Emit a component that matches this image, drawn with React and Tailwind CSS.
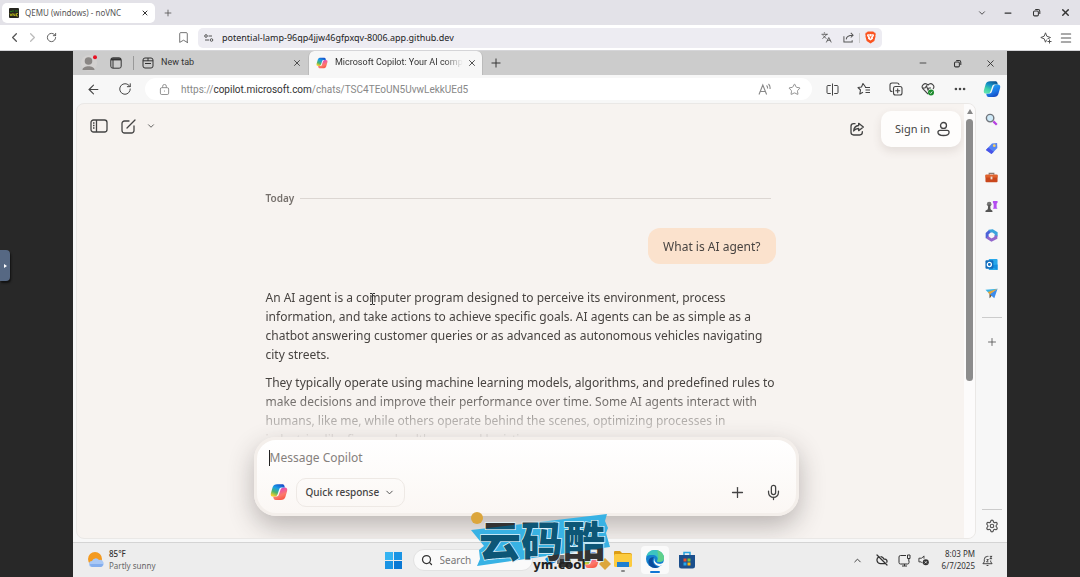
import React, { useId } from 'react';
import {
    ArrowLeft, Bookmark, ChevronDown, ChevronLeft, ChevronRight, ChevronUp, CloudOff, Columns2, Ellipsis,
    Languages, Menu, Mic, Minus, Plus, RotateCw, Search, Settings, Star, X,
} from 'lucide-react';

const IconButton = ({ label, className = '', children }) => (
    <button type="button" aria-label={label} className={`flex shrink-0 items-center justify-center ${className}`}>
        {children}
    </button>
);

const CopilotLogo = ({ blue = false, className }) => {
    const id = useId();
    const leaf = 'M9.500 1.500h7c1.500 0 2.300.8 2.700 2.200l.6 2.300h-4.600c-1.800 0-2.500 1-3 2.600L10.200 14.500c-.7 2.300-2 3.500-4.500 3.500H4.400C1.500 18 .5 16.200 1.200 13.500L3.500 5.500C4.300 2.800 6.400 1.500 9.500 1.500z';
    return (
        <svg viewBox="0 0 24 24" className={className} aria-hidden="true">
            <defs>
                <linearGradient id={`${id}a`} x1="0.8" y1="0" x2="0.3" y2="1">
                    <stop offset="0" stopColor={blue ? '#0a4f8c' : '#1648c8'} />
                    <stop offset="0.4" stopColor={blue ? '#1593c8' : '#1a9ee8'} />
                    <stop offset="0.72" stopColor={blue ? '#3fd0a8' : '#4db36a'} />
                    <stop offset="1" stopColor={blue ? '#5fe3b0' : '#f3cf2c'} />
                </linearGradient>
                <linearGradient id={`${id}b`} x1="0.2" y1="0" x2="0.7" y2="1">
                    <stop offset="0" stopColor={blue ? '#1440b8' : '#f8503c'} />
                    <stop offset="0.4" stopColor={blue ? '#1b74e4' : '#fc7a6a'} />
                    <stop offset="0.7" stopColor={blue ? '#1f8eee' : '#ee5aa0'} />
                    <stop offset="1" stopColor={blue ? '#2bb5f5' : '#a44be6'} />
                </linearGradient>
            </defs>
            <path d={leaf} fill={`url(#${id}b)`} transform="rotate(180 12 12)" />
            <path d={leaf} fill={`url(#${id}a)`} />
        </svg>
    );
};

const RestoreIcon = ({ className }) => (
    <svg viewBox="0 0 12 12" fill="none" stroke="currentColor" strokeWidth="1.4" className={className} aria-hidden="true">
        <rect x="2" y="4" width="6.500" height="6.500" rx="1.500" />
        <path d="M4.300 2h3.700a2.400 2.400 0 0 1 2.400 2.400v3.600" />
    </svg>
);

const ShareIcon = ({ className }) => (
    <svg viewBox="0 0 24 24" fill="none" stroke="currentColor" strokeWidth="2" strokeLinecap="round" strokeLinejoin="round" className={className} aria-hidden="true">
        <path d="M9 4H7a4 4 0 0 0-4 4v9a4 4 0 0 0 4 4h9a4 4 0 0 0 4-4v-1" />
        <path d="M14.500 3.500 21.500 9l-7 5.500v-3.300c-3.500 0-5.600 1-7.500 3.800.4-4.800 3-7.800 7.500-8.200z" />
    </svg>
);

const BraveTabs = () => (
    <div className="flex h-[25px] items-center bg-[#e3e2e8] pl-[2px] text-[#333]">
        <div className="flex h-5 w-[153px] items-center rounded-[5px] bg-white pl-[7px] pr-[5px]">
            <svg viewBox="0 0 10 10" className="mr-[6px] size-[10px]" aria-hidden="true">
                <rect width="10" height="10" rx="1" fill="#26261f" />
                <path d="M1 3.500h2M4 2v2M6 3h3" stroke="#24761f" />
                <path d="M1 5.500l1 2.500 1-2.500M4 8V5.500L6 8V5.500M9 5.500H7.500V8H9" stroke="#c5c516" strokeWidth=".8" fill="none" />
            </svg>
            <span className="flex-1 text-[8px] text-[#555]">QEMU (windows) - noVNC</span>
            <IconButton label="Close tab" className="size-[10px]"><X className="size-2" strokeWidth={3} /></IconButton>
        </div>
        <IconButton label="New tab" className="ml-2 size-[10px]"><Plus className="size-[10px] text-[#555]" /></IconButton>
        <div className="ml-auto flex items-center">
            <IconButton label="Search tabs" className="w-6"><ChevronDown className="size-[10px]" /></IconButton>
            <IconButton label="Minimize" className="w-7"><Minus className="size-[10px]" strokeWidth={3} /></IconButton>
            <IconButton label="Restore" className="w-7"><RestoreIcon className="size-[9px]" /></IconButton>
            <IconButton label="Close" className="w-[30px]"><X className="size-[11px]" strokeWidth={3} /></IconButton>
        </div>
    </div>
);

const BraveToolbar = () => (
    <div className="flex h-[26px] items-center border-b border-[#d5d5d8] bg-white text-[#555]">
        <div className="flex w-[198px] items-center pl-[5px] pr-[6px]">
            <IconButton label="Back" className="w-[18px]"><ChevronLeft className="size-[15px]" /></IconButton>
            <IconButton label="Forward" className="w-[18px] text-[#bbb]"><ChevronRight className="size-[15px]" /></IconButton>
            <IconButton label="Reload" className="w-5"><RotateCw className="size-[11px]" /></IconButton>
            <IconButton label="Bookmark" className="ml-auto w-[18px]"><Bookmark className="size-[13px]" strokeWidth={1.5} /></IconButton>
        </div>
        <div className="flex h-5 flex-1 items-center rounded-[5px] bg-[#edecf2] pl-[6px] pr-[6px]">
            <svg viewBox="0 0 10 8" fill="none" stroke="currentColor" className="h-2 w-[10px]" aria-hidden="true">
                <circle cx="2" cy="2" r="1.300" />
                <path d="M4.500 2H8M1 6h4" />
                <circle cx="7.500" cy="6" r="1.300" />
            </svg>
            <input aria-label="Address" className="ml-2 min-w-0 flex-1 bg-transparent text-[9px] text-[#222] outline-none" defaultValue="potential-lamp-96qp4jjw46gfpxqv-8006.app.github.dev" />
            <IconButton label="Translate" className="w-[22px]"><Languages className="size-[11px]" /></IconButton>
            <IconButton label="Share" className="w-[22px]">
                <svg viewBox="0 0 12 12" fill="none" stroke="currentColor" strokeWidth="1.100" className="size-[11px]" aria-hidden="true">
                    <path d="M1 4.500V11h9V9M3.500 8c.3-3 2.500-4.500 7-4.500M8.500 1l2.500 2.500L8.500 6" />
                </svg>
            </IconButton>
            <span className="h-[10px] w-px bg-[#ccc]" />
            <IconButton label="Brave Shields" className="ml-1 w-3">
                <svg viewBox="0 0 12 14" className="h-[13px] w-[11px]" aria-hidden="true">
                    <path d="M3 .5h6l1 1 1.300.2.4 2-.4 1.300.2.800-1.300 5L6 13.500 1.800 10.800.5 5.800l.2-.8L.3 3.700l.4-2L2 1.500z" fill="#fb5421" />
                    <path d="M3 3.300l1.500.3L6 3.200l1.500.4L9 3.300l.9 1.500-1.500 2.500.4 1-2.800 2-2.800-2 .4-1-1.500-2.500z" fill="#fff" />
                    <path d="M4 5l1.600.7L6 8l.4-2.300L8 5" fill="none" stroke="#fb5421" strokeWidth=".8" />
                </svg>
            </IconButton>
        </div>
        <div className="flex w-[198px] items-center justify-end pr-1">
            <IconButton label="Leo AI" className="w-5">
                <svg viewBox="0 0 12 12" fill="none" stroke="currentColor" strokeLinejoin="round" className="size-3" aria-hidden="true">
                    <path d="M5.500.8 6.800 4.200 10.500 5.500 7.500 6.800M5.500.8 4.200 4.200.8 5.500l3.400 1.300 1.300 3.400 1-2.500M9.500 7.500v4M7.500 9.500h4" />
                </svg>
            </IconButton>
            <IconButton label="Menu" className="w-5"><Menu className="size-[14px]" strokeWidth={1.8} /></IconButton>
        </div>
    </div>
);

const EdgeTabs = () => (
    <div className="flex h-6 items-center bg-[#ccc] font-['Roboto',sans-serif] text-[#333]">
        <button type="button" aria-label="Profile" className="ml-2 flex w-4 justify-center">
            <svg viewBox="0 0 16 16" className="size-4" aria-hidden="true">
                <circle cx="8" cy="8" r="8" fill="#d3d1d0" />
                <circle cx="7.500" cy="6" r="3.800" fill="#8a8684" />
                <path d="M1.500 15c0-5 12-5 12 0z" fill="#8a8684" />
                <circle cx="14" cy="2.200" r="2" fill="#e81123" />
            </svg>
        </button>
        <IconButton label="Workspaces" className="ml-[13px] w-3">
            <svg viewBox="0 0 12 12" className="size-3" fill="none" stroke="currentColor" aria-hidden="true">
                <rect x=".8" y=".8" width="10.400" height="10.400" rx="2" />
                <path d="M1 2.300h10" strokeWidth="2.200" />
                <path d="M3 3v8" />
            </svg>
        </IconButton>
        <span className="ml-[11px] h-[14px] w-px bg-[#999]" />
        <div className="flex w-[174px] items-center pl-2 pr-[6px]">
            <svg viewBox="0 0 12 12" className="mr-[7px] size-3" fill="none" stroke="currentColor" aria-hidden="true">
                <rect x="1" y="1" width="10" height="10" rx="2" />
                <path d="M1 3.800h10M3 6.500h6M6 1v3" />
            </svg>
            <span className="flex-1 text-[9px]">New tab</span>
            <IconButton label="Close New tab" className="size-[10px]"><X className="size-[10px]" /></IconButton>
        </div>
        <div className="flex h-6 w-[175px] items-center rounded-t-md border-x border-[#bbb] bg-[#f7f7f7] pl-[7px] pr-[5px]">
            <CopilotLogo className="mr-[7px] size-3" />
            <span className="min-w-0 flex-1 overflow-hidden whitespace-nowrap text-[9px] mask-r-from-85%">Microsoft Copilot: Your AI companion</span>
            <IconButton label="Close Copilot tab" className="ml-1 size-[10px]"><X className="size-[10px]" /></IconButton>
        </div>
        <IconButton label="New tab" className="ml-[6px] w-[14px]"><Plus className="size-[14px]" strokeWidth={1.700} /></IconButton>
        <div className="ml-auto flex items-center">
            <IconButton label="Minimize window" className="w-[34px]"><Minus className="size-[10px]" /></IconButton>
            <IconButton label="Restore window" className="w-[34px]"><RestoreIcon className="size-[9px]" /></IconButton>
            <IconButton label="Close window" className="w-[33px]"><X className="size-[11px]" /></IconButton>
        </div>
    </div>
);

const EdgeToolbar = () => (
    <div className="flex h-7 items-center bg-[#f7f7f7] pl-1 text-[#444]">
        <IconButton label="Back" className="w-8"><ArrowLeft className="size-[15px]" strokeWidth={1.700} /></IconButton>
        <IconButton label="Refresh" className="w-8"><RotateCw className="size-[14px]" strokeWidth={1.700} /></IconButton>
        <div className="ml-1 mr-1 flex h-[22px] flex-1 items-center rounded-full bg-white pl-[14px] pr-[11px] text-[10px] text-[#888]">
            <svg viewBox="0 0 12 12" fill="none" stroke="currentColor" className="mr-[11px] size-[11px]" aria-hidden="true">
                <rect x="1.500" y="4" width="9" height="7.500" rx="1.500" />
                <path d="M4 4V2.500a2 2 0 0 1 4 0V4M5.500 7.700h1" />
            </svg>
            <a href="#chat" className="flex-1 font-['Roboto',sans-serif]">https://<span className="text-[#333]">copilot.microsoft.com</span>/chats/TSC4TEoUN5UvwLekkUEd5</a>
            <button type="button" aria-label="Read aloud" className="w-4">
                <svg viewBox="0 0 14 12" className="h-3 w-[14px]" fill="none" stroke="currentColor" strokeWidth="1.100" aria-hidden="true">
                    <path d="M1 11.500 4.800 2l3.800 9.500M2.300 8.500h5M8.500 2.500q1.300 1 1 3M10.500 1q2 2 1.500 5" />
                </svg>
            </button>
            <IconButton label="Add to favorites" className="ml-[13px] w-[14px]"><Star className="size-[13px]" strokeWidth={1.700} /></IconButton>
        </div>
        <IconButton label="Split screen" className="w-8">
            <svg viewBox="0 0 13 13" fill="none" stroke="currentColor" className="size-[13px]" aria-hidden="true">
                <path d="M6.500.5v12M4.800 2.500H2A1 1 0 0 0 1 3.500v6a1 1 0 0 0 1 1h2.800M8.200 2.500H11a1 1 0 0 1 1 1v6a1 1 0 0 1-1 1H8.200" />
            </svg>
        </IconButton>
        <IconButton label="Favorites" className="w-8">
            <svg viewBox="0 0 14 14" className="size-[14px]" fill="none" stroke="currentColor" strokeWidth="1.100" strokeLinejoin="round" aria-hidden="true">
                <path d="M8.500 5 6 1.500 4.500 5 1 5.500 3.500 8l-.7 4L6 10.300M8 5.500h5M8.500 8h4.500M8.500 10.500h4.500" />
            </svg>
        </IconButton>
        <IconButton label="Collections" className="w-8">
            <svg viewBox="0 0 14 14" className="size-[14px]" fill="none" stroke="currentColor" strokeWidth="1.100" strokeLinecap="round" aria-hidden="true">
                <rect x="4.500" y="4.500" width="8.500" height="8.500" rx="2" />
                <path d="M3 9.500A2 2 0 0 1 1 7.500V3a2 2 0 0 1 2-2h5a2 2 0 0 1 2 1.500M8.700 6.700v4M6.700 8.700h4" />
            </svg>
        </IconButton>
        <IconButton label="Browser essentials" className="w-8">
            <svg viewBox="0 0 14 14" className="size-[14px]" fill="none" stroke="currentColor" strokeWidth="1.100" aria-hidden="true">
                <path d="M7 12 2 7C-.5 4 3.500-.5 7 3c3.500-3.500 7.500 1 5 4M1.500 6H4l1.500-2L7 8l1-2h2" />
                <circle cx="10" cy="10.500" r="3" fill="#1c8a2c" stroke="none" />
                <path d="M8.700 10.500l1 1 1.500-2" stroke="#fff" strokeWidth=".8" />
            </svg>
        </IconButton>
        <IconButton label="More" className="w-8"><Ellipsis className="size-[14px]" strokeWidth={2.500} /></IconButton>
        <IconButton label="Copilot" className="w-[31px]"><CopilotLogo blue className="size-[18px]" /></IconButton>
    </div>
);

const sidebarApps = [
    {
        name: 'Search',
        art: <><circle cx="5.500" cy="5.500" r="4" fill="#cfeaf8" stroke="#70757c" strokeWidth="1.500" /><path d="M9 9l3.700 3.700" stroke="#b63fe0" strokeWidth="2.400" /></>,
    },
    {
        name: 'Shopping',
        art: <><path d="M7.500 1.500 13 1l.3 5.500L7 13 1 8.500z" fill="#5484f2" /><path d="M1 8.500 7 13l2.500-2.500L3.500 6z" fill="#4a54e8" /><circle cx="10" cy="4" r="1.500" fill="#f5cf62" /></>,
    },
    {
        name: 'Tools',
        art: <><path d="M4.500 4V2.500h5V4" fill="none" stroke="#8a7a70" strokeWidth="1.200" /><rect x=".5" y="4" width="13" height="8" rx="1" fill="#c9471c" /><path d="M.5 4h13v3H.5z" fill="#e0622c" /><rect x="6" y="6" width="2" height="3" fill="#e8ddd5" /></>,
    },
    {
        name: 'Games',
        art: <><path d="M8.500 1h5v2l-1 1v4l1 1.500h-5l.8-1.500V4l-.8-1z" fill="#b44df0" /><circle cx="4.500" cy="4.500" r="2.500" fill="#777" /><path d="M3.500 5h2l.5 5 2 1.500V13H.5v-1.500L3 10z" fill="#555" /></>,
    },
    {
        name: 'Microsoft 365',
        art: <><path d="M4 2.500 8 2l4 2.500V8" fill="none" stroke="#39a4dc" strokeWidth="3.200" /><path d="M5 2.500 2.300 5v5" fill="none" stroke="#4b62d8" strokeWidth="3.200" /><path d="M2.300 9 7 12l4.700-2.500V7" fill="none" stroke="#9367cc" strokeWidth="3.200" /></>,
    },
    {
        name: 'Outlook',
        art: <><rect x="4" y="1" width="9.500" height="12" rx="1" fill="#28a8ea" /><path d="M5 8l8.500 5V7z" fill="#1490df" /><rect x=".5" y="2.500" width="8.500" height="9" rx="1" fill="#0f6cbd" /><circle cx="4.700" cy="7" r="2.200" fill="none" stroke="#fff" strokeWidth="1.300" /></>,
    },
    {
        name: 'Drop',
        art: <><path d="M.5 3 13.500 2 5 7.500z" fill="#38b4e8" /><path d="M13.500 2 10 12 7 9.500 5 12V7.500z" fill="#3c8cec" /><path d="M3 5.500 13.500 2 5 8z" fill="#e8a63a" /><path d="M5 7.500V12l2-2.500z" fill="#8c5a18" /></>,
    },
];

const EdgeSidebar = () => (
    <nav aria-label="Sidebar" className="flex w-[31px] flex-col items-center bg-[#f7f7f7] pt-[2px] text-[#555]">
        {sidebarApps.map((app) => (
            <IconButton key={app.name} label={app.name} className="h-[29px]">
                <svg viewBox="0 0 14 14" className="size-[13px]" aria-hidden="true">{app.art}</svg>
            </IconButton>
        ))}
        <span className="mt-[9px] h-px w-5 bg-[#ccc]" />
        <IconButton label="Customize" className="mt-4 size-4"><Plus className="size-3" strokeWidth={1.700} /></IconButton>
        <span className="mb-2 mt-auto h-px w-5 bg-[#ccc]" />
        <IconButton label="Sidebar settings" className="mb-[5px] size-4"><Settings className="size-[14px]" /></IconButton>
    </nav>
);

const Conversation = () => (
    <section id="chat" className="min-h-0 flex-1 overflow-hidden mask-[linear-gradient(to_bottom,black_83%,transparent_102%)]">
        <div className="mx-auto max-w-[545px] pl-3 pr-[23px] pt-[41px] text-[12px] leading-[19px] text-[#474340]">
            <div className="flex h-5 items-center text-[10px] font-semibold text-[#77716d]">
                <h2>Today</h2>
                <span className="ml-[6px] mr-[5px] h-px flex-1 bg-[#dcd6d2]" />
            </div>
            <div className="mt-5 flex justify-end">
                <p className="flex h-9 items-center rounded-xl bg-[#fbe2cd] px-[15px]">What is AI agent?</p>
            </div>
            <p className="mt-6 whitespace-nowrap">
                An AI agent is a computer program designed to perceive its environment, process<br />
                information, and take actions to achieve specific goals. AI agents can be as simple as a<br />
                chatbot answering customer queries or as advanced as autonomous vehicles navigating<br />
                city streets.
            </p>
            <p className="mt-[9px] whitespace-nowrap">
                They typically operate using machine learning models, algorithms, and predefined rules to<br />
                make decisions and improve their performance over time. Some AI agents interact with<br />
                humans, like me, while others operate behind the scenes, optimizing processes in<br />
                industries like finance, healthcare, and logistics.
            </p>
        </div>
    </section>
);

const Composer = () => (
    <form className="mx-auto mb-[22px] w-full max-w-[545px] rounded-[22px] border-[3px] border-[#f4efeb] bg-linear-to-b from-white to-[#fbf7f4] px-3 pt-[9px] pb-[6px] shadow-[0_10px_26px_rgba(60,50,50,0.32)]">
        <div className="flex h-[18px] items-center">
            <span className="h-4 w-px bg-[#222]" />
            <input aria-label="Message Copilot" placeholder="Message Copilot" className="flex-1 bg-transparent text-[12px] outline-none placeholder:text-[#85807c]" />
        </div>
        <div className="mt-[10px] flex h-[30px] items-center text-[#444]">
            <CopilotLogo className="ml-px size-[18px]" />
            <button type="button" className="ml-2 flex h-[29px] items-center rounded-[10px] border border-[#eee9e5] px-[9px] text-[10px] font-medium">
                Quick response
                <ChevronDown className="ml-[5px] size-[11px]" />
            </button>
            <IconButton label="Add" className="ml-auto w-5"><Plus className="size-[17px]" strokeWidth={1.800} /></IconButton>
            <IconButton label="Talk to Copilot" className="ml-4 w-5"><Mic className="size-[17px]" strokeWidth={1.800} /></IconButton>
        </div>
    </form>
);

const CopilotPage = () => (
    <main className="relative flex min-w-0 flex-1 flex-col overflow-hidden rounded-lg border border-[#eae8e6] bg-[#f7f3f0] text-[#444]">
        <header className="flex items-start px-[10px] pt-[7px]">
            <IconButton label="Open sidebar" className="h-[30px] w-6">
                <svg viewBox="0 0 18 14" className="h-[14px] w-[18px]" fill="none" stroke="currentColor" strokeWidth="1.300" aria-hidden="true">
                    <rect x="1" y="1" width="16" height="12" rx="2.500" />
                    <path d="M6.500 1v12M3 4h1.500M3 6.500h1.500M3 9h1.500" />
                </svg>
            </IconButton>
            <IconButton label="New chat" className="ml-[5px] h-[30px] w-6">
                <svg viewBox="0 0 15 15" className="size-[15px]" fill="none" stroke="currentColor" strokeWidth="1.300" strokeLinecap="round" aria-hidden="true">
                    <path d="M8 2H3.500A2.500 2.500 0 0 0 1 4.500v7A2.500 2.500 0 0 0 3.500 14h7a2.500 2.500 0 0 0 2.500-2.500V7M6 9l8-8" />
                </svg>
            </IconButton>
            <IconButton label="Chat options" className="h-[30px] w-[22px]"><ChevronDown className="size-[10px]" /></IconButton>
            <IconButton label="Share" className="ml-auto h-9 w-6"><ShareIcon className="size-4" /></IconButton>
            <button type="button" className="ml-3 mr-1 flex h-9 w-20 items-center justify-between rounded-[10px] bg-[#fefdfc] pl-[14px] pr-[11px] text-[11px] shadow-[0_4px_10px_rgba(80,60,50,0.12)]">
                Sign in
                <svg viewBox="0 0 14 16" className="h-4 w-[13px]" fill="none" stroke="currentColor" strokeWidth="1.400" aria-hidden="true">
                    <circle cx="7" cy="4.200" r="3.200" />
                    <path d="M3 9.500h8a2 2 0 0 1 2 2c0 2-2.500 3.500-6 3.500s-6-1.500-6-3.500a2 2 0 0 1 2-2z" />
                </svg>
            </button>
        </header>
        <Conversation />
        <Composer />
        <div aria-hidden="true" className="absolute inset-y-0 right-0 flex w-[11px] flex-col items-center bg-[#fcfbfb] pt-[5px]">
            <span className="border-x-[3px] border-b-[5px] border-x-transparent border-b-[#888]" />
            <span className="mt-[5px] h-[61%] w-[7px] rounded-full bg-[#8c8c8c]" />
        </div>
        <svg viewBox="0 0 7 12" fill="none" stroke="#333" className="absolute left-[292px] top-[189px] h-3 w-[7px]" aria-hidden="true">
            <path d="M1 .5h2l.5.5.5-.5h2M3.500 1v10M1 11.500h2l.5-.5.5.5h2" />
        </svg>
    </main>
);

const Taskbar = () => (
    <footer className="grid h-[35px] grid-cols-[1fr_auto_1fr] items-center border-t border-[#d4d4d4] bg-[#ededed] text-[8px] leading-3 text-[#333]">
        <button type="button" className="flex items-center pl-[14px] text-left">
            <svg viewBox="0 0 18 18" className="mr-1 size-[18px]" aria-hidden="true">
                <circle cx="8" cy="8" r="7" fill="#f39a1f" />
                <path d="M5 16a3 3 0 0 1 0-6 4 4 0 0 1 7-1 3.500 3.500 0 0 1 2 7z" fill="#a9c8f5" />
                <path d="M5 16a3 3 0 0 1-2-3h13a3 3 0 0 1-2 3z" fill="#84aeee" />
            </svg>
            <span><span className="block font-medium">85°F</span><span className="block text-[#666]">Partly sunny</span></span>
        </button>
        <div className="flex items-center">
            <IconButton label="Start" className="w-8">
                <svg viewBox="0 0 17 17" className="size-[17px]" aria-hidden="true">
                    <path d="M0 0h8v8H0z" fill="#35b4f2" />
                    <path d="M9 0h8v8H9zM0 9h8v8H0z" fill="#1a94e4" />
                    <path d="M9 9h8v8H9z" fill="#0a78d4" />
                </svg>
            </IconButton>
            <label className="ml-[3px] mr-[10px] flex h-[22px] w-[120px] items-center rounded-full border border-[#e2e2e2] bg-[#fafafa] pl-[7px]">
                <Search className="mr-[7px] size-3 shrink-0" strokeWidth={2.500} />
                <input aria-label="Search Windows" placeholder="Search" className="w-full min-w-0 bg-transparent text-[10px] outline-none placeholder:text-[#777]" />
            </label>
            <IconButton label="Task View" className="w-8">
                <svg viewBox="0 0 28 18" className="h-[18px] w-7" aria-hidden="true">
                    <path d="M0 8l6-5 5 8-7 3z" fill="#1687dc" />
                    <path d="M12 4h10v9H12z" fill="#777" />
                    <path d="M15 8h11v8H15z" fill="#333" />
                </svg>
            </IconButton>
            <IconButton label="Copilot app" className="w-8"><CopilotLogo className="size-[18px]" /></IconButton>
            <IconButton label="File Explorer" className="w-8">
                <svg viewBox="0 0 20 24" className="h-6 w-5" aria-hidden="true">
                    <path d="M1 4a1 1 0 0 1 1-1h5l2 2h8a2 2 0 0 1 2 2v2H1z" fill="#dc9d14" />
                    <rect x="1" y="6" width="18" height="13" rx="1.500" fill="#fccb3f" />
                    <path d="M4 14h12v5H4z" fill="#1d7fd0" />
                    <rect x="8" y="22" width="4" height="2" rx="1" fill="#888" />
                </svg>
            </IconButton>
            <button type="button" aria-label="Edge" className="mx-[2px] flex h-7 w-7 items-center justify-center rounded bg-[#fafafa]">
                <svg viewBox="0 0 20 26" className="h-[26px] w-5" aria-hidden="true">
                    <circle cx="10" cy="12" r="9" fill="#1583d0" />
                    <path d="M1.500 9C3 4 6.500 3 10 3c5.500 0 9 4 9 8 0 3-2.500 4-5 4-1.500 0-2.300-.5-1.800-1.200C13.500 11.500 12 8.500 8.500 8c-3-.4-5.500.3-7 1z" fill="#3cc4c0" />
                    <path d="M12 3.200c4.500 1 7 4.300 7 7.800 0 3-2.500 4-5 4-1.500 0-2.300-.5-1.800-1.200 2-2.800.8-7.800-.2-10.600z" fill="#5fd08a" />
                    <path d="M9 10.500c-3 2.500-1 8.500 5 9.500C9 22.500 3 19.500 3.500 14 4 11 7 9.500 9 10.500z" fill="#0c4c9c" />
                    <path d="M10 11c-1.500 1.800 0 5 3.500 5.800 2 .4 3.500 0 4.800-1-1 2.300-2.500 3.500-4.500 3.200-4.500-.6-6.500-5.500-3.800-8z" fill="#fafafa" />
                    <rect x="5" y="24" width="10" height="2" rx="1" fill="#0f76d4" />
                </svg>
            </button>
            <IconButton label="Microsoft Store" className="w-8">
                <svg viewBox="0 0 18 18" className="size-[18px]" aria-hidden="true">
                    <path d="M6 5V1.500h6V5" fill="none" stroke="#28a4e0" strokeWidth="1.500" />
                    <path d="M1 4h16v11a2.500 2.500 0 0 1-2.500 2.500h-11A2.500 2.500 0 0 1 1 15z" fill="#1b4f8c" />
                    <path d="M5.500 7.500h3v3h-3z" fill="#f05126" />
                    <path d="M9.500 7.500h3v3h-3z" fill="#80c23c" />
                    <path d="M5.500 11.500h3v3h-3z" fill="#28a8ea" />
                    <path d="M9.500 11.500h3v3h-3z" fill="#fcb813" />
                </svg>
            </IconButton>
        </div>
        <div className="flex items-center justify-end pr-[14px]">
            <IconButton label="Hidden icons" className="w-6"><ChevronUp className="size-[11px]" /></IconButton>
            <IconButton label="OneDrive" className="w-6"><CloudOff className="size-3" strokeWidth={2.500} /></IconButton>
            <IconButton label="Network" className="w-[22px]">
                <svg viewBox="0 0 13 13" className="size-[13px]" fill="none" stroke="currentColor" aria-hidden="true">
                    <path d="M8 1.500H2.500A1.500 1.500 0 0 0 1 3v5.500A1.500 1.500 0 0 0 2.500 10h7A1.500 1.500 0 0 0 11 8.500V7M4 12h5M6.500 10v2M9.500 1h2.500v3.500H9.500zM10.800 4.500V7" />
                </svg>
            </IconButton>
            <IconButton label="Volume" className="mr-[10px] w-4">
                <svg viewBox="0 0 12 12" className="size-[11px]" fill="none" stroke="currentColor" aria-hidden="true">
                    <path d="M6.500 4V1L4 3.500H1v4h2.500L5 9" />
                    <circle cx="8.500" cy="8" r="3.300" fill="#333" stroke="none" />
                    <path d="M7.300 6.800l2.400 2.400M9.700 6.800 7.300 9.200" stroke="#fff" strokeWidth=".8" />
                </svg>
            </IconButton>
            <button type="button" className="text-right"><span className="block">8:03 PM</span><span className="block">6/7/2025</span></button>
            <IconButton label="Notifications" className="ml-[6px] w-3">
                <svg viewBox="0 0 12 12" className="size-[11px]" fill="none" stroke="currentColor" aria-hidden="true">
                    <path d="M7 1.500H6A3.500 3.500 0 0 0 2.500 5v2.500L1 9.500h10L9.500 7.500V6M5 11.500h2M8.500 1.500h2.500L8.500 4H11M5 5h2L5 7.500h2" />
                </svg>
            </IconButton>
        </div>
    </footer>
);

const ribbon = '0,17 136,1 134,8 137,15 135,20 139,34 6,53 9,46 8,37 13,33';

const Watermark = () => (
    <svg viewBox="0 0 142 64" role="img" aria-label="云码酷 ym.cool" className="pointer-events-none absolute bottom-0 left-[398px] h-16 w-[142px] overflow-visible">
        <defs>
            <pattern id="ink" patternUnits="userSpaceOnUse" width="142" height="64">
                <rect width="142" height="64" fill="#333" />
                <polygon points={ribbon} fill="#0d5676" />
            </pattern>
        </defs>
        <polygon points={ribbon} fill="#38b2e4" />
        <circle cx="6" cy="5" r="6" fill="#dca63c" />
        <path d="M134 45l6 6-6 6-6-6z" fill="#dca63c" />
        <text x="8" y="44" fill="url(#ink)" stroke="#dff2fa" strokeWidth="1.500" paintOrder="stroke" className="font-['Noto_Sans_CJK_SC',sans-serif] text-[42px] font-black">云码酷</text>
        <text x="62" y="56" fill="#222" className="font-['DejaVu_Sans',sans-serif] text-[12px] font-bold">ym.cool</text>
    </svg>
);

const App = () => (
    <div className="flex h-screen flex-col overflow-hidden font-['Noto_Sans',sans-serif]">
        <BraveTabs />
        <BraveToolbar />
        <div className="relative flex min-h-0 flex-1 bg-[#282828] px-[73px]">
            <button type="button" aria-label="Open noVNC controls" className="absolute left-0 top-[199px] flex h-[31px] w-[10px] items-center justify-center rounded-r bg-[#566883] shadow-[1px_2px_2px_#111]">
                <span className="border-y-2 border-l-[3px] border-y-transparent border-l-white" />
            </button>
            <div className="relative flex min-w-0 flex-1 flex-col">
                <EdgeTabs />
                <EdgeToolbar />
                <div className="flex min-h-0 flex-1 bg-[#f7f7f7] pb-[3px] pl-[3px]">
                    <CopilotPage />
                    <EdgeSidebar />
                </div>
                <Taskbar />
                <Watermark />
            </div>
        </div>
    </div>
);

export default App;
